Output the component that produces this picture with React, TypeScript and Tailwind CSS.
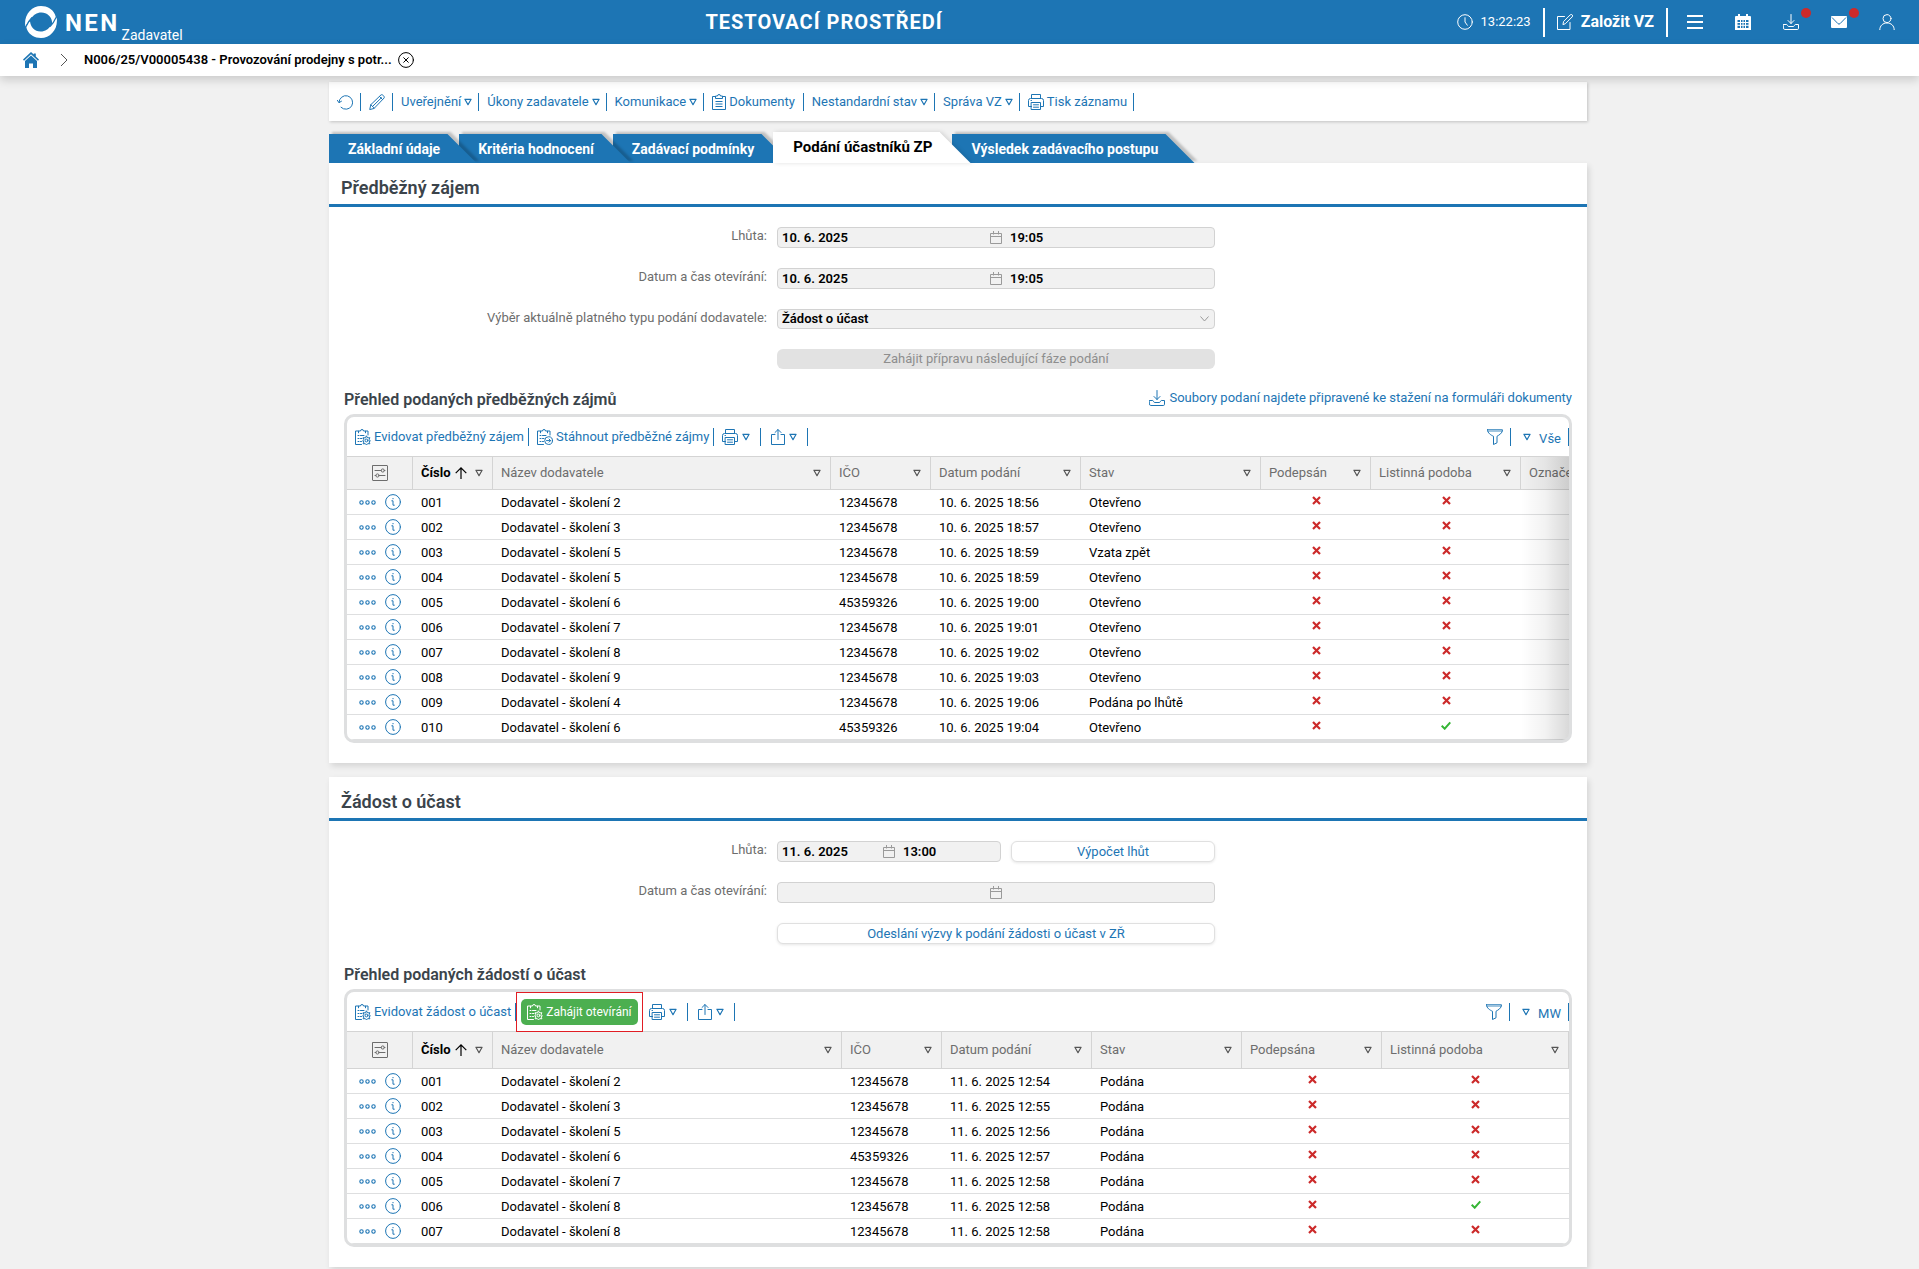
import React from "react";

type IconProps = { className?: string };

function Svg({ className = "size-4", children, width = 1 }: IconProps & { children: React.ReactNode; width?: number }) {
  return (
    <svg
      viewBox="0 0 16 16"
      className={`shrink-0 ${className}`}
      fill="none"
      stroke="currentColor"
      strokeWidth={width}
      strokeLinecap="round"
      strokeLinejoin="round"
      aria-hidden="true"
    >
      {children}
    </svg>
  );
}

const Logo = () => (
  <svg viewBox="0 0 32 32" className="size-8 shrink-0" aria-hidden="true">
    <path fill="#fff" d="M0.3 20.5C-1.5 9 6.500 0 16 0c6.500 0 11.500 3 14 8.500 1.500 3.500 1.300 8-1 11.500-1 1.600-2.200 2.900-3.500 4 1.300-3 1.900-5.500 1.500-8.500C26.300 10.500 22 6.500 16.500 6.500c-5 0-8 2.600-10.500 6C4 15.200 1.800 17.800 0.300 20.500z" />
    <path fill="#fff" d="M31.700 11.500C33.500 23 25.500 32 16 32c-6.500 0-11.500-3-14-8.500-.4-1-.6-1.900-.7-2.800C3 17.500 4.300 15.800 5 15.200 5.500 21 9.500 25.500 15.500 25.500c5 0 8-2.600 10.500-6 2-2.700 4.200-5.300 5.700-8z" />
    <path d="M1 20.500C2.500 16.800 4.500 14 7 11.400M31 11.500c-1.500 3.700-3.500 6.500-6 9.100" stroke="#1d75b4" strokeWidth="1.200" fill="none" />
  </svg>
);

const Clock = () => (
  <Svg><circle cx="8" cy="8" r="7.300" /><path d="M8 3.700V8l2.300 3.200" /></Svg>
);
const Edit = () => (
  <Svg><path d="M7.500 2.500h-7v13h12.500V8.500" /><path d="M6 10.200l.6-2.700 6.600-6.600a1.350 1.350 0 0 1 2 2L8.600 9.500z" /></Svg>
);
const Menu = () => (
  <Svg width={2}><path d="M0 2h16M0 8h16M0 14h16" strokeLinecap="butt" /></Svg>
);
const CalendarSolid = () => (
  <Svg>
    <path fill="currentColor" stroke="none" fillRule="evenodd" d="M0 3a1 1 0 0 1 1-1h2V0h2v2h6V0h2v2h2a1 1 0 0 1 1 1v13H0zM2.500 6v8h11V6z" />
    <path d="M2.500 8.500h11M2.500 11.300h11M5.500 6v8M8 6v8M10.500 6v8" />
  </Svg>
);
const Download = () => (
  <Svg><path d="M8 0.500v9M5 6.500l3 3 3-3" /><path d="M0.500 10.500h3.200c.8 0 .8 2 2 2h4.600c1.200 0 1.200-2 2-2h3.200v3.800a1.200 1.200 0 0 1-1.200 1.200H1.700a1.200 1.200 0 0 1-1.200-1.200z" /></Svg>
);
const Mail = () => (
  <svg viewBox="0 0 16 12" className="h-3 w-4" aria-hidden="true">
    <rect width="16" height="12" rx="1" fill="currentColor" />
    <path d="M1 1.500l6 6.200a1.500 1.500 0 0 0 2 0L15 1.500" stroke="#1d75b4" fill="none" />
  </svg>
);
const User = () => (
  <Svg><circle cx="8" cy="4.600" r="4" /><path d="M0.800 15.700c0-4 3-6.700 7.200-6.700s7.200 2.700 7.200 6.700" /></Svg>
);
const Home = () => (
  <svg viewBox="0 0 16 16" className="size-4" fill="currentColor" aria-hidden="true">
    <path d="M8 0l2.800 2.600V1.500h2v3L16 7.500l-1 1.200L8 2.300 1 8.700 0 7.500z" />
    <path d="M8 3.500l6 5.500v7h-4v-4.500H6V16H2V9z" />
  </svg>
);
const CloseCircle = () => (
  <Svg><circle cx="8" cy="8" r="7.400" /><path d="M5.700 5.700l4.600 4.600M10.300 5.700l-4.600 4.600" /></Svg>
);
const Refresh = () => (
  <Svg><path d="M2 8.500a6.800 6.800 0 1 1 2 4.800" /><path d="M0.300 6.300L2 8.700l2.500-1.500" /></Svg>
);
const Pencil = () => (
  <Svg><path d="M0.800 15.200l1-4.500L12 .9c1.300-1 4 1.700 3.100 3.100L5.300 14.200z" /><path d="M10.500 2.500l3 3M1.800 10.700l3.500 3.500M3.500 12.500L12.500 3.700" /></Svg>
);
const Clipboard = () => (
  <svg viewBox="0 0 14 16" className="h-4 w-[14px] shrink-0" fill="none" stroke="currentColor" strokeLinejoin="round" aria-hidden="true">
    <path d="M3.500 2.500h-3v13h13v-13h-3" />
    <path d="M3.500 4.500v-2.500h2a1.500 1.500 0 0 1 3 0h2v2.500zM3.500 7.500h7M3.500 10h7M3.500 12.500h7" />
  </svg>
);
const clipBody = (
  <>
    <path d="M3.500 2H.5v13.500h6M10.500 2h2.500v4" />
    <path d="M3.500 3.800V2h2a1.500 1.500 0 0 1 3 0h2v1.800M3 6.500h1M3 9.500h1M3 12.500h1M5.500 6.500H9M5.500 9.500h1.500M5.500 12.500h1" />
  </>
);
const ClipboardGear = () => (
  <Svg>
    {clipBody}
    <circle cx="11.500" cy="11.500" r="1.400" />
    <path d="M11.500 7.100l1.200 1.800 2.200-.2-.9 2 1.400 1.100-1.400 1 .9 2-2.200-.2-1.200 1.400-1.200-1.400-2.200.2.900-2-1.400-1 1.400-1.100-.9-2 2.200.2z" />
  </Svg>
);
const ClipboardArrow = () => (
  <Svg>{clipBody}<circle cx="11.600" cy="11.600" r="3.900" /><path d="M9.500 11.600h4M12 10l1.600 1.600L12 13.200" /></Svg>
);
const Printer = () => (
  <Svg><path d="M3.500 4.500v-4h9v4M3.500 12.500h-3v-6a2 2 0 0 1 2-2h11a2 2 0 0 1 2 2v6h-3" /><path d="M3.500 8.500h9v7h-9zM5.500 10.800h5M5.500 13.200h5M3 6.500h.5" /></Svg>
);
const Share = () => (
  <svg viewBox="0 0 14 16" className="h-4 w-[14px]" fill="none" stroke="currentColor" strokeLinecap="round" strokeLinejoin="round" aria-hidden="true">
    <path d="M4 5.500H.5v10h13v-10H10M7 10.500V.7M4 3.500l3-3 3 3" />
  </svg>
);
const Funnel = () => (
  <Svg><path d="M0.500 0.800h15c0 3.500-3.500 5.200-5.500 6.500v6.500l-3.500 1.700V7.300C4 6 .5 4.300.5.800z" /><path d="M1 2.200h14" strokeWidth="0.600" /></Svg>
);
const Triangle = () => (
  <svg viewBox="0 0 8 8" className="size-2 shrink-0" fill="none" stroke="currentColor" strokeWidth="1.200" strokeLinejoin="round" aria-hidden="true">
    <path d="M0.900 1.300h6.200L4 6.700z" />
  </svg>
);
const Calendar = () => (
  <svg viewBox="0 0 12 13" className="h-[13px] w-3 shrink-0 text-[#9a9a9a]" fill="none" stroke="currentColor" aria-hidden="true">
    <path d="M0.500 2.500h11v10H.5zM.5 5.500h11M3.500 0v3.500M8.500 0v3.500" />
  </svg>
);
const Columns = () => (
  <Svg><rect x="0.500" y="0.500" width="15" height="15" rx="0.500" /><circle cx="10.800" cy="5.500" r="1.600" /><circle cx="5.500" cy="10.500" r="1.600" /><path d="M3 5.500h6.200M12.400 5.500H13M3 10.500h.9M7.100 10.500H13" /></Svg>
);
const ArrowUp = () => (
  <svg viewBox="0 0 12 12" className="size-3 shrink-0" fill="none" stroke="currentColor" strokeWidth="1.200" aria-hidden="true">
    <path d="M6 12V1M0.700 6.200L6 .9l5.300 5.300" />
  </svg>
);
const Dots = () => (
  <svg viewBox="0 0 17 5" className="h-[5px] w-[17px]" fill="none" stroke="currentColor" strokeWidth="1.100" aria-hidden="true">
    <circle cx="2.500" cy="2.500" r="1.700" /><circle cx="8.500" cy="2.500" r="1.700" /><circle cx="14.500" cy="2.500" r="1.700" />
  </svg>
);
const Info = () => (
  <Svg><circle cx="8" cy="8" r="7.400" /><path d="M6.800 6.800H8V11.200h1.300M8 4.400v.4" /></Svg>
);
const Cross = () => (
  <svg viewBox="0 0 9 9" className="mx-auto mb-1.5 size-[9px]" stroke="#cc2a2a" strokeWidth="2.200" role="img" aria-label="Ne">
    <path d="M1 1l7 7M8 1L1 8" />
  </svg>
);
const Check = () => (
  <svg viewBox="0 0 10 9" className="mx-auto mb-1.5 h-[9px] w-[10px]" fill="none" stroke="#35b535" strokeWidth="2" role="img" aria-label="Ano">
    <path d="M0.700 4.700l3 3L9.300 1.300" />
  </svg>
);

function Header() {
  return (
    <header className="flex h-11 items-center bg-[#1d75b4] text-white">
      <a href="#uvod" className="flex h-full flex-1 items-center pl-[25px]">
        <Logo />
        <span className="mt-0.5 ml-2 text-2xl leading-7 font-bold tracking-widest">NEN</span>
        <span className="ml-0.5 self-end text-sm leading-[18px]">Zadavatel</span>
      </a>
      <h1 className="text-[20px] font-bold tracking-wider">TESTOVACÍ PROSTŘEDÍ</h1>
      <div className="flex flex-[1_1_296px] items-center justify-end pr-6">
        <Clock />
        <time className="ml-2 text-[13px]">13:22:23</time>
        <span className="ml-3 h-[29px] w-0.5 bg-white" />
        <button className="ml-3 flex items-center gap-2 text-base font-bold">
          <Edit />
          Založit VZ
        </button>
        <span className="ml-3 h-[29px] w-0.5 bg-white" />
        <div className="ml-[19px] flex items-center gap-8">
          <button aria-label="Menu"><Menu /></button>
          <button aria-label="Kalendář"><CalendarSolid /></button>
          <button aria-label="Stažené" className="relative">
            <Download />
            <span className="absolute -top-1.5 left-[18px] size-2.5 rounded-full bg-[#cc2a2a]" />
          </button>
          <button aria-label="Zprávy" className="relative">
            <Mail />
            <span className="absolute -top-2 left-[18px] size-2.5 rounded-full bg-[#cc2a2a]" />
          </button>
          <button aria-label="Uživatel"><User /></button>
        </div>
      </div>
    </header>
  );
}

function Breadcrumb() {
  return (
    <nav className="relative z-20 flex h-8 items-center bg-white pl-[23px] text-[13px] shadow-[0_4px_10px_rgba(0,0,0,0.16)]">
      <a href="#domu" aria-label="Domů" className="text-[#1d75b4]"><Home /></a>
      <svg viewBox="0 0 8 14" className="ml-[21px] h-3.5 w-2" fill="none" stroke="#555" aria-hidden="true"><path d="M1 1l6 6-6 6" /></svg>
      <a href="#zakazka" className="ml-4 font-semibold text-black">N006/25/V00005438 - Provozování prodejny s potr...</a>
      <button aria-label="Zavřít" className="ml-1.5 text-black"><CloseCircle /></button>
    </nav>
  );
}

function BarItem({ icon, label, menu, className }: { icon?: React.ReactNode; label?: string; menu?: boolean; className?: string }) {
  const padding = className ?? (label ? "pr-1.5 pl-2" : "pr-[7px] pl-2");
  return (
    <button aria-label={label ? undefined : "Akce"} className={`flex h-[18px] items-center border-r border-[#1d75b4] ${label ? "gap-[3px]" : "gap-1"} ${padding}`}>
      {icon}
      {label && <span>{label}</span>}
      {menu && <Triangle />}
    </button>
  );
}

function RecordBar() {
  return (
    <div className="mt-1.5 flex h-[39px] items-center bg-white pl-2 text-[13px] text-[#1d75b4] shadow-[1px_1px_3px_rgba(0,0,0,0.2)]">
      <BarItem icon={<Refresh />} className="pr-[7px]" />
      <BarItem icon={<Pencil />} />
      <BarItem label="Uveřejnění" menu />
      <BarItem label="Úkony zadavatele" menu />
      <BarItem label="Komunikace" menu />
      <BarItem icon={<Clipboard />} label="Dokumenty" className="px-2" />
      <BarItem label="Nestandardní stav" menu />
      <BarItem label="Správa VZ" menu />
      <BarItem icon={<Printer />} label="Tisk záznamu" />
    </div>
  );
}

function Tab({ label, layer, active }: { label: string; layer: string; active?: boolean }) {
  const fill = active ? "bg-white" : "bg-[#1d75b4]";
  return (
    <button
      role="tab"
      aria-selected={!!active}
      className={`relative font-bold ${layer} ${active ? "h-[31px] px-5 text-[15px] text-black" : "h-[29px] px-[19px] text-sm text-white"}`}
    >
      <span className={`absolute inset-0 ${active ? "drop-shadow-[2px_0_2px_rgba(0,0,0,0.12)]" : "drop-shadow-[3px_-2px_1px_rgba(0,0,0,0.2)]"}`}>
        <span className={`absolute inset-y-0 right-3 left-0 ${fill}`} />
        <span className={`absolute inset-y-0 -right-[3px] left-8 skew-x-[45deg] ${fill}`} />
      </span>
      <span className="relative">{label}</span>
    </button>
  );
}

function Tabs() {
  return (
    <div role="tablist" className="mt-[11px] flex items-end">
      <Tab label="Základní údaje" layer="z-[3]" />
      <Tab label="Kritéria hodnocení" layer="z-[2]" />
      <Tab label="Zadávací podmínky" layer="z-[1]" />
      <Tab label="Podání účastníků ZP" layer="z-[5]" active />
      <Tab label="Výsledek zadávacího postupu" layer="z-[4]" />
    </div>
  );
}

function FormRow({ label, id, children }: { label?: string; id?: string; children: React.ReactNode }) {
  return (
    <div className="flex">
      <label htmlFor={id} className="w-[448px] pr-2.5 text-right text-[13px] leading-[18px] text-[#6d6d6d]">{label}</label>
      <div className="flex w-[438px] gap-2.5">{children}</div>
    </div>
  );
}

function DateField({ id, date = "", time = "", className = "w-full" }: { id: string; date?: string; time?: string; className?: string }) {
  return (
    <div className={`flex h-[21px] items-center rounded border border-[#d2d2d2] bg-[#f1f1f1] text-[13px] font-semibold text-black ${className}`}>
      <input id={id} readOnly defaultValue={date} className="w-0 flex-1 px-1" />
      <Calendar />
      <input aria-label="Čas" readOnly defaultValue={time} className="w-0 flex-1 pl-2" />
    </div>
  );
}

function ActionButton({ children }: { children: React.ReactNode }) {
  return (
    <button type="button" className="flex h-[21px] flex-1 items-center justify-center rounded-md border border-[#e0e0e0] bg-white text-[13px] text-[#1d75b4] shadow-[0_1px_3px_rgba(0,0,0,0.1)]">
      {children}
    </button>
  );
}

type Column = { title: string; width: string; noMenu?: boolean };

function DataTable({ columns, rows, headHeight }: { columns: Column[]; rows: (string | boolean)[][]; headHeight: string }) {
  return (
    <table className="w-full table-fixed border-separate border-spacing-0 text-left text-[13px]">
      <thead>
        <tr className={`bg-[#f1f1f1] text-[#6d6d6d] ${headHeight}`}>
          <th className="w-[66px] border-y border-r border-[#d4d4d4] p-0">
            <button aria-label="Nastavení sloupců" className="mx-auto block"><Columns /></button>
          </th>
          <th className="w-20 border-y border-r border-[#d4d4d4] py-0 pr-[9px] pl-2">
            <button className="flex w-full items-center font-bold text-black">
              Číslo
              <span className="ml-1"><ArrowUp /></span>
              <span className="ml-auto text-[#555]"><Triangle /></span>
            </button>
          </th>
          {columns.map((c) => (
            <th key={c.title} className={`border-y border-[#d4d4d4] py-0 pl-2 font-normal ${c.noMenu ? "pr-0" : "border-r pr-[9px]"} ${c.width}`}>
              <button className="flex w-full items-center justify-between">
                <span className="whitespace-nowrap">{c.title}</span>
                {!c.noMenu && <span className="text-[#555]"><Triangle /></span>}
              </button>
            </th>
          ))}
        </tr>
      </thead>
      <tbody className="text-black">
        {rows.map((r) => (
          <tr key={String(r[0])} className="h-[25px]">
            <td className="border-b border-[#dedfe0] p-0 pl-3 text-[#1d75b4]">
              <span className="flex items-center gap-[9px]">
                <button aria-label="Další akce"><Dots /></button>
                <button aria-label="Detail"><Info /></button>
              </span>
            </td>
            {r.map((v, i) => (
              <td key={i} className="truncate border-b border-[#dedfe0] px-2 pt-0.5 pb-0">
                {typeof v === "boolean" ? v ? <Check /> : <Cross /> : v}
              </td>
            ))}
          </tr>
        ))}
      </tbody>
    </table>
  );
}

function TableBox({ actions, view, children }: { actions: React.ReactNode; view: string; children: React.ReactNode }) {
  return (
    <div className="relative mx-[15px] overflow-hidden rounded-[10px] border-[3px] border-[#dedfe0]">
      <div className="flex h-[39px] items-center pl-2 text-[13px] text-[#1d75b4]">
        {actions}
        <div className="ml-auto flex items-center">
          <BarItem icon={<Funnel />} />
          <button className="flex h-[18px] items-center gap-2 border-r border-[#1d75b4] pr-[7px] pl-3">
            <Triangle />
            <span className="pt-1">{view}</span>
          </button>
        </div>
      </div>
      {children}
    </div>
  );
}

const earlyColumns: Column[] = [
  { title: "Název dodavatele", width: "" },
  { title: "IČO", width: "w-[100px]" },
  { title: "Datum podání", width: "w-[150px]" },
  { title: "Stav", width: "w-[180px]" },
  { title: "Podepsán", width: "w-[110px]" },
  { title: "Listinná podoba", width: "w-[150px]" },
  { title: "Označe", width: "w-12", noMenu: true },
];

const earlyRows: (string | boolean)[][] = [
  ["001", "Dodavatel - školení 2", "12345678", "10. 6. 2025 18:56", "Otevřeno", false, false, ""],
  ["002", "Dodavatel - školení 3", "12345678", "10. 6. 2025 18:57", "Otevřeno", false, false, ""],
  ["003", "Dodavatel - školení 5", "12345678", "10. 6. 2025 18:59", "Vzata zpět", false, false, ""],
  ["004", "Dodavatel - školení 5", "12345678", "10. 6. 2025 18:59", "Otevřeno", false, false, ""],
  ["005", "Dodavatel - školení 6", "45359326", "10. 6. 2025 19:00", "Otevřeno", false, false, ""],
  ["006", "Dodavatel - školení 7", "12345678", "10. 6. 2025 19:01", "Otevřeno", false, false, ""],
  ["007", "Dodavatel - školení 8", "12345678", "10. 6. 2025 19:02", "Otevřeno", false, false, ""],
  ["008", "Dodavatel - školení 9", "12345678", "10. 6. 2025 19:03", "Otevřeno", false, false, ""],
  ["009", "Dodavatel - školení 4", "12345678", "10. 6. 2025 19:06", "Podána po lhůtě", false, false, ""],
  ["010", "Dodavatel - školení 6", "45359326", "10. 6. 2025 19:04", "Otevřeno", false, true, ""],
];

const requestColumns: Column[] = [
  { title: "Název dodavatele", width: "" },
  { title: "IČO", width: "w-[100px]" },
  { title: "Datum podání", width: "w-[150px]" },
  { title: "Stav", width: "w-[150px]" },
  { title: "Podepsána", width: "w-[140px]" },
  { title: "Listinná podoba", width: "w-[187px]" },
];

const requestRows: (string | boolean)[][] = [
  ["001", "Dodavatel - školení 2", "12345678", "11. 6. 2025 12:54", "Podána", false, false],
  ["002", "Dodavatel - školení 3", "12345678", "11. 6. 2025 12:55", "Podána", false, false],
  ["003", "Dodavatel - školení 5", "12345678", "11. 6. 2025 12:56", "Podána", false, false],
  ["004", "Dodavatel - školení 6", "45359326", "11. 6. 2025 12:57", "Podána", false, false],
  ["005", "Dodavatel - školení 7", "12345678", "11. 6. 2025 12:58", "Podána", false, false],
  ["006", "Dodavatel - školení 8", "12345678", "11. 6. 2025 12:58", "Podána", false, true],
  ["007", "Dodavatel - školení 8", "12345678", "11. 6. 2025 12:58", "Podána", false, false],
];

function Section({ title, children }: { title: string; children: React.ReactNode }) {
  return (
    <section className="relative bg-white pb-5 shadow-[2px_3px_6px_rgba(0,0,0,0.12)]">
      <h2 className="flex h-11 items-center border-b-[3px] border-[#1d75b4] pt-2 pl-3 text-[18px] font-semibold text-[#3b444b]">{title}</h2>
      {children}
    </section>
  );
}

export default function App() {
  return (
    <div className="min-h-screen bg-[#f1f1f1] font-['Roboto',sans-serif]">
      <Header />
      <Breadcrumb />
      <main className="pr-[3px]">
        <div className="mx-auto max-w-[1258px]">
          <RecordBar />
          <Tabs />
          <Section title="Předběžný zájem">
            <form className="flex flex-col gap-5 pt-5">
              <FormRow label="Lhůta:" id="l1"><DateField id="l1" date="10. 6. 2025" time="19:05" /></FormRow>
              <FormRow label="Datum a čas otevírání:" id="o1"><DateField id="o1" date="10. 6. 2025" time="19:05" /></FormRow>
              <FormRow label="Výběr aktuálně platného typu podání dodavatele:" id="typ">
                <div className="relative w-full">
                  <select id="typ" className="block h-5 w-full appearance-none rounded border border-[#d2d2d2] bg-[#f1f1f1] pl-1 text-[13px] leading-[18px] font-semibold text-black">
                    <option>Žádost o účast</option>
                  </select>
                  <svg viewBox="0 0 9 6" className="pointer-events-none absolute top-[7px] right-1.5 h-1.5 w-[9px]" fill="none" stroke="#999" aria-hidden="true"><path d="M0.500 .5l4 4.500 4-4.500" /></svg>
                </div>
              </FormRow>
              <FormRow>
                <button type="button" disabled className="h-5 w-full rounded-md bg-[#e2e2e2] text-[13px] leading-5 text-[#8e8e8e]">Zahájit přípravu následující fáze podání</button>
              </FormRow>
            </form>
            <div className="flex h-[45px] items-center justify-between px-[15px] pt-4">
              <h3 className="text-base font-semibold text-[#3b444b]">Přehled podaných předběžných zájmů</h3>
              <a href="#soubory" className="flex items-center gap-1 pb-1 text-[13px] text-[#1d75b4]"><Download />Soubory podaní najdete připravené ke stažení na formuláři dokumenty</a>
            </div>
            <TableBox
              view="Vše"
              actions={
                <>
                  <BarItem icon={<ClipboardGear />} label="Evidovat předběžný zájem" className="pr-1" />
                  <BarItem icon={<ClipboardArrow />} label="Stáhnout předběžné zájmy" className="pr-1 pl-2" />
                  <BarItem icon={<Printer />} menu className="pr-2.5 pl-2" />
                  <BarItem icon={<Share />} menu className="px-2.5" />
                </>
              }
            >
              <DataTable columns={earlyColumns} rows={earlyRows} headHeight="h-[34px]" />
              <div className="pointer-events-none absolute top-10 right-0 bottom-0 w-12 bg-linear-to-r from-transparent via-black/5 to-black/15" />
            </TableBox>
          </Section>
          <div className="h-3.5" />
          <Section title="Žádost o účast">
            <form className="flex flex-col gap-5 pt-5">
              <FormRow label="Lhůta:" id="l2">
                <DateField id="l2" date="11. 6. 2025" time="13:00" className="w-[224px]" />
                <ActionButton>Výpočet lhůt</ActionButton>
              </FormRow>
              <FormRow label="Datum a čas otevírání:" id="o2"><DateField id="o2" /></FormRow>
              <FormRow><ActionButton>Odeslání výzvy k podání žádosti o účast v ZŘ</ActionButton></FormRow>
            </form>
            <div className="flex h-[45px] items-center px-[15px] pt-4">
              <h3 className="text-base font-semibold text-[#3b444b]">Přehled podaných žádostí o účast</h3>
            </div>
            <TableBox
              view="MW"
              actions={
                <>
                  <BarItem icon={<ClipboardGear />} label="Evidovat žádost o účast" className="pr-1" />
                  <div className="flex h-10 items-center border border-[#e11d24] px-1">
                    <button className="flex h-[26px] items-center gap-[3px] rounded-[5px] bg-[#4caf50] px-1.5 text-xs text-white">
                      <ClipboardGear />
                      Zahájit otevírání
                    </button>
                  </div>
                  <BarItem icon={<Printer />} menu className="pr-2.5 pl-1.5" />
                  <BarItem icon={<Share />} menu className="px-2.5" />
                </>
              }
            >
              <DataTable columns={requestColumns} rows={requestRows} headHeight="h-[38px]" />
            </TableBox>
          </Section>
        </div>
      </main>
    </div>
  );
}
